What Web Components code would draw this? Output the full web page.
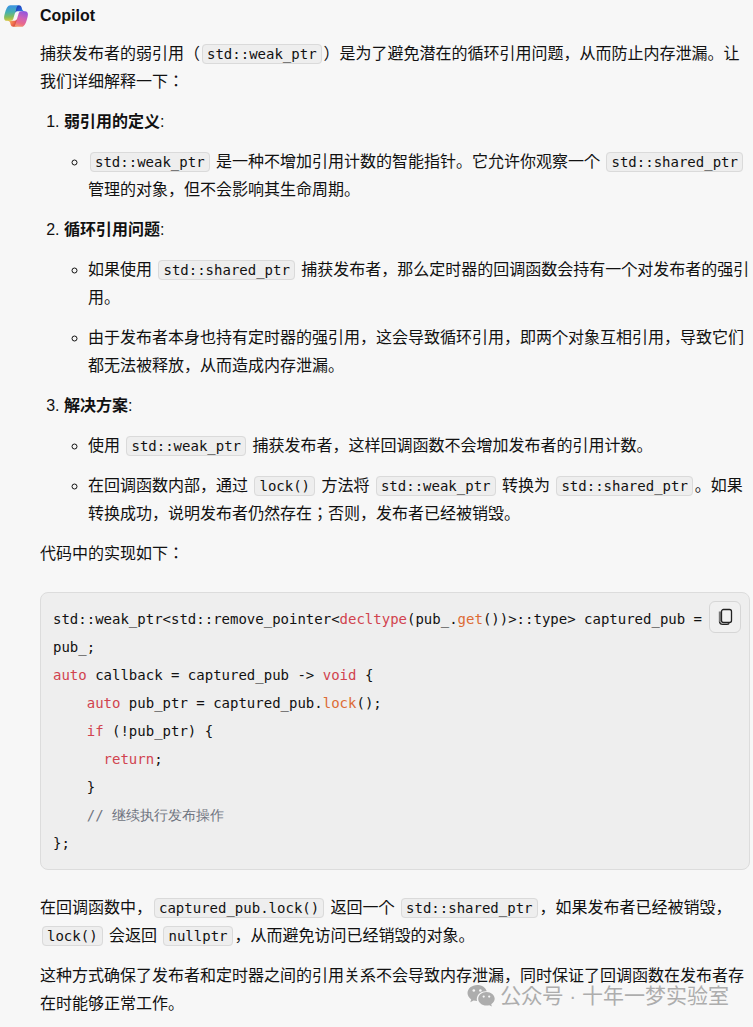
<!DOCTYPE html>
<html>
<head>
<meta charset="utf-8">
<meta name="viewport" content="width=device-width, initial-scale=1">
<title>Copilot</title>
<style>
  body{margin:0; background:#f7f7f7; color:#111; font:16px/28px "Liberation Sans", "Noto Sans CJK JP", sans-serif}
</style>
</head>
<body>
<chat-message author="Copilot">
  <copilot-logo slot="avatar"></copilot-logo>
  <answer-body></answer-body>
  <account-mark slot="mark">公众号 · 十年一梦实验室</account-mark>
</chat-message>

<script>
const esc = (s) => String(s || '').replace(/[<>&"]/g, (m) => ({ '<': '&lt;', '>': '&gt;', '&': '&amp;', '"': '&quot;' }[m]));

class CopilotLogo extends HTMLElement {
  constructor() {
    super();
    this.attachShadow({ mode: 'open' }).innerHTML = `
      <style>
        :host{display:block}
        svg{display:block; width:26px; height:26px}
      </style>
      <svg viewBox="0 0 48 48" fill="none" aria-hidden="true">
        <defs>
          <radialGradient id="a" cx="0" cy="0" r="1" gradientUnits="userSpaceOnUse" gradientTransform="translate(38.005 20.514) rotate(-129.304) scale(17.303 16.271)">
            <stop offset=".096" stop-color="#2b8fe8"/><stop offset=".773" stop-color="#2253CE"/><stop offset="1" stop-color="#1f45b8"/>
          </radialGradient>
          <radialGradient id="b" cx="0" cy="0" r="1" gradientUnits="userSpaceOnUse" gradientTransform="translate(11.2 32.8) rotate(51.84) scale(15.991 15.512)">
            <stop stop-color="#f5b060"/><stop offset=".634" stop-color="#f0694a"/><stop offset=".923" stop-color="#C8453f"/>
          </radialGradient>
          <linearGradient id="c" x1="13" y1="4" x2="15" y2="34" gradientUnits="userSpaceOnUse">
            <stop offset=".1" stop-color="#3d97dd"/><stop offset=".42" stop-color="#45b0b0"/><stop offset=".72" stop-color="#84bd5c"/><stop offset="1" stop-color="#e3cb3c"/>
          </linearGradient>
          <linearGradient id="d" x1="38" y1="13" x2="27" y2="44" gradientUnits="userSpaceOnUse">
            <stop offset=".05" stop-color="#8f55e0"/><stop offset=".45" stop-color="#cd62b8"/><stop offset=".75" stop-color="#e9688c"/><stop offset="1" stop-color="#f59a68"/>
          </linearGradient>
        </defs>
        <path fill="url(#a)" d="M34.142 7.325A4.63 4.63 0 0 0 29.7 4h-1.351a4.63 4.63 0 0 0-4.554 3.794L21.48 20.407l.575-1.965a4.63 4.63 0 0 1 4.43-3.321h7.849l3.292 1.282 3.173-1.282h-.926a4.63 4.63 0 0 1-4.442-3.325z"/>
        <path fill="url(#b)" d="M14.33 40.656A4.63 4.63 0 0 0 18.779 44h2.87a4.63 4.63 0 0 0 4.628-4.514l.312-12.159-.654 2.233a4.63 4.63 0 0 1-4.428 3.318h-7.915l-2.821-1.53-3.054 1.53h.911a4.63 4.63 0 0 1 4.448 3.344z"/>
        <path fill="url(#c)" d="M29.5 4H13.46C8.877 4 6.127 10.057 4.294 16.113 2.122 23.289-.72 32.885 7.501 32.885h6.926a4.63 4.63 0 0 0 4.454-3.359c1.202-4.212 3.308-11.56 4.963-17.153.84-2.843 1.54-5.285 2.616-6.805C27.062 4.716 28.066 4 29.5 4z"/>
        <path fill="url(#d)" d="M18.498 44h16.041c4.583 0 7.333-6.057 9.166-12.115 2.172-7.176 5.014-16.774-3.207-16.774h-6.925a4.63 4.63 0 0 0-4.455 3.359c-1.202 4.213-3.308 11.562-4.963 17.156-.84 2.843-1.54 5.285-2.615 6.806C20.937 43.284 19.933 44 18.498 44z"/>
      </svg>
    `;
  }
}

class ChatMessage extends HTMLElement {
  constructor() {
    super();
    this.attachShadow({ mode: 'open' });
  }

  connectedCallback() {
    this.shadowRoot.innerHTML = `
      <style>
        :host{display:block}
        article{position:relative; padding:0 3px 0 40px}
        header{display:flex; align-items:center; gap:11px; height:32px; margin:0 0 8px -37px}
        h2{margin:0; font-size:16px; line-height:28px}
      </style>
      <article>
        <header>
          <slot name="avatar"></slot>
          <h2>${esc(this.getAttribute('author'))}</h2>
        </header>
        <slot></slot>
        <slot name="mark"></slot>
      </article>
    `;
  }
}

class InlineCode extends HTMLElement {
  constructor() {
    super();
    // No whitespace around the markup: the host is inline, so it would show as a gap.
    this.attachShadow({ mode: 'open' }).innerHTML = `<style>
        :host{display:inline}
        code{margin:0 2px; padding:1px 4px; border:1px solid #dadada; border-radius:4px; background:#eee; font:14px "DejaVu Sans Mono", monospace; white-space:nowrap}
      </style><code><slot></slot></code>`;
  }
}

class CodeBlock extends HTMLElement {
  constructor() {
    super();
    this.attachShadow({ mode: 'open' }).innerHTML = `
      <style>
        :host{display:block; position:relative}
        pre{margin:0; padding:12px; border:1px solid #dcdcdc; border-radius:8px; background:#eee; font:14px/28px "DejaVu Sans Mono", "Noto Sans CJK JP", monospace; white-space:pre-wrap}
        ::slotted(div){white-space:pre-wrap}
        button{position:absolute; top:9px; right:9px; display:flex; align-items:center; justify-content:center; width:32px; height:32px; padding:0; border:1px solid #d6d6d6; border-radius:6px; background:#f0f0f0; color:#222; cursor:pointer}
        button:hover{background:#e6e6e6}
        svg{display:block; width:20px; height:20px}
      </style>
      <pre><code><slot></slot></code></pre>
      <button type="button" aria-label="复制">
        <svg viewBox="0 0 20 20" fill="none" stroke="currentColor" aria-hidden="true">
          <path d="M5 4.500v10" stroke="#777" stroke-width="2.400"/>
          <path d="M4.500 14.500c.2 1.800 1.400 2.900 3.200 2.900h4.100c1.100 0 1.900-.4 2.400-1.100" stroke-width="1.400"/>
          <rect x="6.500" y="2.500" width="10" height="13" rx="2" stroke-width="1.300"/>
        </svg>
      </button>
    `;
    this.shadowRoot.querySelector('button').addEventListener('click', () => {
      const text = Array.from(this.children, (line) => line.textContent).join('\n');
      navigator.clipboard?.writeText?.(text);
    });
  }
}

class AnswerBody extends HTMLElement {
  constructor() {
    super();
    this.attachShadow({ mode: 'open' });
    this.render();
  }

  render() {
    // One div per line of code, so the lines hold no newlines of their own.
    const code = [
      'std::weak_ptr&lt;std::remove_pointer&lt;<span class="kw">decltype</span>(pub_.<span class="fn">get</span>())&gt;::type&gt; captured_pub = pub_;',
      '<span class="kw">auto</span> callback = captured_pub -&gt; <span class="kw">void</span> {',
      '    <span class="kw">auto</span> pub_ptr = captured_pub.<span class="fn">lock</span>();',
      '    <span class="kw">if</span> (!pub_ptr) {',
      '      <span class="kw">return</span>;',
      '    }',
      '    <span class="cm">// 继续执行发布操作</span>',
      '};',
    ];

    this.shadowRoot.innerHTML = `
      <style>
        :host{display:block}
        p, ol, ul{margin:0 0 12px}
        ol, ul{padding-left:24px}
        li > ul{margin:12px 0 0}
        li + li{margin-top:12px}
        ul{list-style:circle}
        code-block{margin:24px 0}
        p:last-child{margin-bottom:0}
        .kw{color:#d1434f}
        .fn{color:#dd6b35}
        .cm{color:#6e7480}
      </style>
      <p>捕获发布者的弱引用（<inline-code>std::weak_ptr</inline-code>）是为了避免潜在的循环引用问题，从而防止内存泄漏。让我们详细解释一下：</p>
      <ol>
        <li><strong>弱引用的定义</strong>:
          <ul>
            <li><inline-code>std::weak_ptr</inline-code> 是一种不增加引用计数的智能指针。它允许你观察一个 <inline-code>std::shared_ptr</inline-code> 管理的对象，但不会影响其生命周期。</li>
          </ul>
        </li>
        <li><strong>循环引用问题</strong>:
          <ul>
            <li>如果使用 <inline-code>std::shared_ptr</inline-code> 捕获发布者，那么定时器的回调函数会持有一个对发布者的强引用。</li>
            <li>由于发布者本身也持有定时器的强引用，这会导致循环引用，即两个对象互相引用，导致它们都无法被释放，从而造成内存泄漏。</li>
          </ul>
        </li>
        <li><strong>解决方案</strong>:
          <ul>
            <li>使用 <inline-code>std::weak_ptr</inline-code> 捕获发布者，这样回调函数不会增加发布者的引用计数。</li>
            <li>在回调函数内部，通过 <inline-code>lock()</inline-code> 方法将 <inline-code>std::weak_ptr</inline-code> 转换为 <inline-code>std::shared_ptr</inline-code>。如果转换成功，说明发布者仍然存在；否则，发布者已经被销毁。</li>
          </ul>
        </li>
      </ol>
      <p>代码中的实现如下：</p>
      <code-block>${code.map((line) => `<div>${line}</div>`).join('')}</code-block>
      <p>在回调函数中，<inline-code>captured_pub.lock()</inline-code> 返回一个 <inline-code>std::shared_ptr</inline-code>，如果发布者已经被销毁，<inline-code>lock()</inline-code> 会返回 <inline-code>nullptr</inline-code>，从而避免访问已经销毁的对象。</p>
      <p>这种方式确保了发布者和定时器之间的引用关系不会导致内存泄漏，同时保证了回调函数在发布者存在时能够正常工作。</p>
    `;
  }
}

// Account signature laid over the end of the message.
class AccountMark extends HTMLElement {
  constructor() {
    super();
    this.attachShadow({ mode: 'open' }).innerHTML = `
      <style>
        :host{position:absolute; right:24px; bottom:8px; display:flex; align-items:center; gap:5px; color:#adadad; font-size:21px; line-height:28px; white-space:nowrap; pointer-events:none}
        svg{display:block; width:28px; height:24px}
      </style>
      <svg viewBox="0 0 28 24" aria-hidden="true">
        <path fill="currentColor" d="M10.200 1C4.800 1 .5 4.600.5 9.100c0 2.600 1.400 4.800 3.700 6.300l-.9 2.900 3.300-1.700c1.200.3 2.300.5 3.500.5-1.500-5.200 2.700-9.900 8.900-9.900h.7C18.800 3.600 15 1 10.200 1z"/>
        <path fill="currentColor" d="M27.700 14.800c0-3.800-3.700-6.800-8.200-6.800s-8.300 3-8.300 6.800 3.700 6.800 8.300 6.800c1 0 1.900-.2 2.800-.4l2.600 1.400-.7-2.400c2.100-1.200 3.500-3.200 3.500-5.400z"/>
        <g fill="#f7f7f7"><circle cx="6.800" cy="6.500" r="1.300"/><circle cx="13.400" cy="6.500" r="1.300"/><circle cx="16.700" cy="12.600" r="1.100"/><circle cx="22.200" cy="12.600" r="1.100"/></g>
      </svg>
      <span><slot></slot></span>
    `;
  }
}

customElements.define('copilot-logo', CopilotLogo);
customElements.define('inline-code', InlineCode);
customElements.define('code-block', CodeBlock);
customElements.define('answer-body', AnswerBody);
customElements.define('account-mark', AccountMark);
customElements.define('chat-message', ChatMessage);
</script>
</body>
</html>
